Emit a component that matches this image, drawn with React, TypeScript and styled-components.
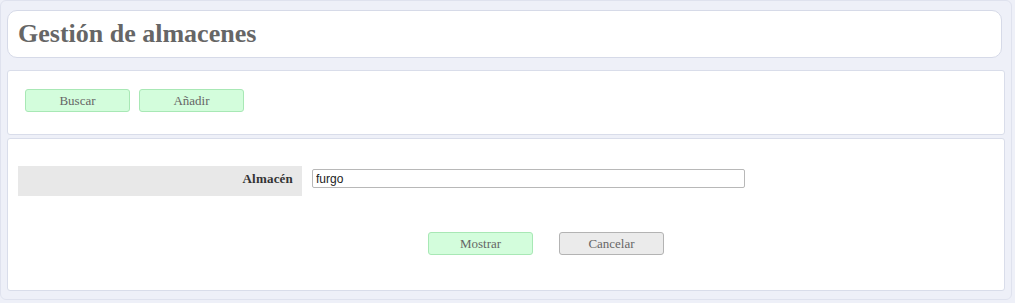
import React, { FC } from 'react';
import styled, { createGlobalStyle } from 'styled-components';

const GlobalStyle = createGlobalStyle`
    body {
        margin: 0;
        background: #eef0f8;
        font-family: "Liberation Serif", "Times New Roman", serif;
    }
`;

const Frame = styled.div`
    width: 1012px;
    height: 300px;
    box-sizing: border-box;
    border: 1px solid #dfe2ee;
    border-radius: 6px;
    padding: 9px 0 0 6px;
    display: flex;
    flex-direction: column;
`;

const TitlePanel = styled.header`
    width: 995px;
    height: 48px;
    box-sizing: border-box;
    background: #fff;
    border: 1px solid #d6dae8;
    border-radius: 10px;
    display: flex;
    align-items: center;
    padding-left: 10px;
`;

const Title = styled.h1`
    margin: 0;
    font-size: 26px;
    font-weight: bold;
    color: #666;
`;

const Panel = styled.section<{ $mt: number; $h: number }>`
    width: 998px;
    height: ${(p) => p.$h}px;
    margin-top: ${(p) => p.$mt}px;
    box-sizing: border-box;
    background: #fff;
    border: 1px solid #d9ddea;
    border-radius: 3px;
`;

const Toolbar = styled.div`
    display: flex;
    gap: 9px;
    padding: 18px 0 0 17px;
`;

const Button = styled.button<{ $variant?: 'green' | 'gray' }>`
    width: 105px;
    height: 23px;
    padding: 0;
    border-radius: 3px;
    font-family: "Liberation Serif", "Times New Roman", serif;
    font-size: 13px;
    color: #666;
    background: ${(p) => (p.$variant === 'gray' ? '#ebebeb' : '#d3fddc')};
    border: 1px solid ${(p) => (p.$variant === 'gray' ? '#b3b3b3' : '#a8e8b5')};
    cursor: pointer;
`;

const Form = styled.div`
    padding: 27px 0 0 10px;
`;

const Row = styled.div`
    display: flex;
    align-items: flex-start;
    gap: 10px;
`;

const Label = styled.label`
    width: 284px;
    height: 30px;
    box-sizing: border-box;
    background: #e8e8e8;
    font-weight: bold;
    font-size: 13px;
    letter-spacing: 0.2px;
    color: #333;
    text-align: right;
    padding: 5px 9px 0 0;
`;

const Input = styled.input`
    width: 433px;
    height: 19px;
    margin-top: 3px;
    box-sizing: border-box;
    border: 1px solid #b8b8b8;
    border-radius: 2px;
    padding: 0 3px;
    font-family: "Liberation Sans", Arial, sans-serif;
    font-size: 12px;
    color: #222;
    outline: none;
`;

const Actions = styled.div`
    display: flex;
    gap: 26px;
    padding: 36px 0 0 410px;
`;

const App: FC = () => {
    return (
        <>
            <GlobalStyle />
            <Frame>
                <TitlePanel>
                    <Title>Gestión de almacenes</Title>
                </TitlePanel>
                <Panel $mt={12} $h={65}>
                    <Toolbar>
                        <Button>Buscar</Button>
                        <Button>Añadir</Button>
                    </Toolbar>
                </Panel>
                <Panel $mt={3} $h={153}>
                    <Form>
                        <Row>
                            <Label>Almacén</Label>
                            <Input defaultValue="furgo" />
                        </Row>
                        <Actions>
                            <Button>Mostrar</Button>
                            <Button $variant="gray">Cancelar</Button>
                        </Actions>
                    </Form>
                </Panel>
            </Frame>
        </>
    );
};

export default App;
